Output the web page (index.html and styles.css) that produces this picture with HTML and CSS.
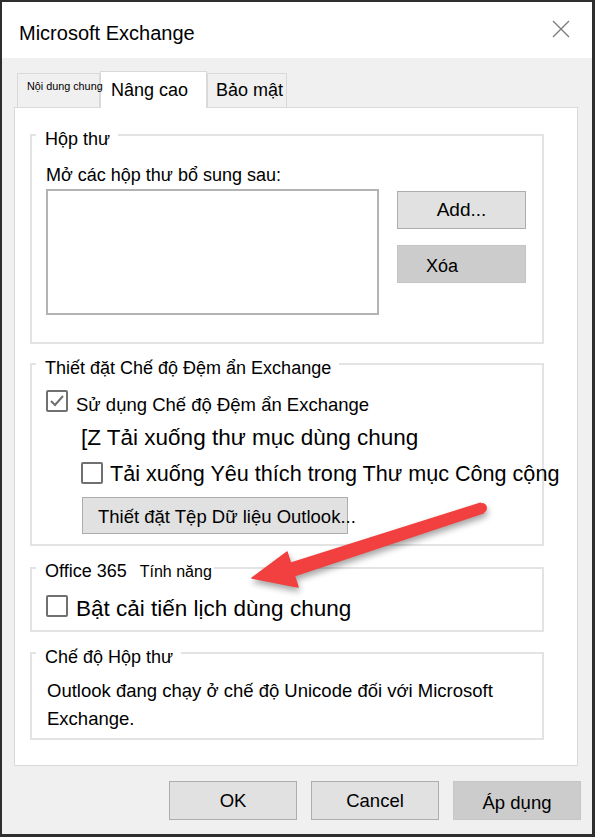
FILE: index.html
```html
<!DOCTYPE html>
<html lang="vi">
<head>
<meta charset="utf-8">
<title>Microsoft Exchange</title>
<link rel="stylesheet" href="styles.css">
</head>
<body>
<div class="window">
  <div class="titlebar">
    <span class="title">Microsoft Exchange</span>
    <svg class="close" viewBox="0 0 18 18"><path d="M1 1 L17 17 M17 1 L1 17" stroke="#7a7a7a" stroke-width="1.3" fill="none"/></svg>
  </div>
  <div class="body">
    <div class="tabs">
      <div class="tab tab-general">Nội dung chung</div>
      <div class="tab tab-active">Nâng cao</div>
      <div class="tab tab-security">Bảo mật</div>
    </div>
    <div class="panel">
      <fieldset class="group g-mailbox">
        <legend>Hộp thư</legend>
        <div class="text-line">Mở các hộp thư bổ sung sau:</div>
        <div class="mailbox-row">
          <div class="listbox"></div>
          <div class="side-buttons">
            <button class="btn btn-side">Add...</button>
            <button class="btn btn-side btn-remove">Xóa</button>
          </div>
        </div>
      </fieldset>

      <fieldset class="group g-cache">
        <legend>Thiết đặt Chế độ Đệm ẩn Exchange</legend>
        <div class="check-row">
          <span class="checkbox"><svg class="tick" viewBox="0 0 18 18"><polyline points="3,9 7,13 15,4" fill="none" stroke="#6e6e6e" stroke-width="2"/></svg></span>
          <span class="cb-label-sm">Sử dụng Chế độ Đệm ẩn Exchange</span>
        </div>
        <div class="big-line">[Z Tải xuống thư mục dùng chung</div>
        <div class="check-row row-fav">
          <span class="checkbox cb-fav"></span>
          <span class="cb-label-big cb-favtext">Tải xuống Yêu thích trong Thư mục Công cộng</span>
        </div>
        <div class="btn btn-datafile">Thiết đặt Tệp Dữ liệu Outlook...</div>
      </fieldset>

      <fieldset class="group g-o365">
        <legend><span class="o365">Office 365</span><span class="feat">Tính năng</span></legend>
        <div class="check-row">
          <span class="checkbox"></span>
          <span class="cb-label-big cb-cal">Bật cải tiến lịch dùng chung</span>
        </div>
      </fieldset>

      <fieldset class="group g-mode">
        <legend>Chế độ Hộp thư</legend>
        <div class="mode-text">Outlook đang chạy ở chế độ Unicode đối với Microsoft Exchange.</div>
      </fieldset>
    </div>
    <div class="footer">
      <button class="btn btn-foot">OK</button>
      <button class="btn btn-foot">Cancel</button>
      <button class="btn btn-foot btn-apply">Áp dụng</button>
    </div>
  </div>
  <svg class="arrow" viewBox="0 0 595 837">
    <polygon points="480.5,503.2 290.6,563.3 287,552 252,578 298,587 294.4,575.7 483.5,512.8" fill="#f1403f" stroke="#f1403f" stroke-width="1.5" stroke-linejoin="round"/>
    <circle cx="482" cy="508" r="5" fill="#f1403f"/>
  </svg>
</div>
</body>
</html>
```
FILE: styles.css
```css
body {
  margin: 0;
  font-family: "Liberation Sans", Arial, sans-serif;
  color: #000;
}

.window {
  position: relative;
  width: 595px;
  height: 837px;
  box-sizing: border-box;
  border: 2px solid #2e2e2e;
  border-right-width: 3px;
  border-bottom-width: 3px;
  background: #f0f0f0;
}

.titlebar {
  height: 56px;
  background: #fff;
  display: flex;
  align-items: center;
  padding-left: 17px;
}

.title {
  flex: 1;
  font-size: 20px;
  line-height: 24px;
  padding-top: 6px;
}

.close {
  width: 18px;
  height: 18px;
  margin-right: 22px;
  margin-bottom: 2px;
}

.body {
  padding-left: 12px;
}

.tabs {
  display: flex;
  align-items: flex-end;
  padding-top: 13px;
  margin-left: 3px;
}

.tab {
  box-sizing: border-box;
  border: 1px solid #d9d9d9;
  border-bottom: none;
  background: #f0f0f0;
  white-space: nowrap;
}

.tab-general {
  width: 83px;
  height: 34px;
  font-size: 10.8px;
  line-height: 14px;
  padding: 5px 0 0 9px;
  position: relative;
  z-index: 2;
}

.tab-active {
  width: 107px;
  height: 37px;
  margin-bottom: -1px;
  background: #fff;
  position: relative;
  z-index: 1;
  font-size: 18px;
  line-height: 22px;
  padding: 7px 0 0 10px;
}

.tab-security {
  width: 80px;
  height: 34px;
  font-size: 18px;
  line-height: 22px;
  padding: 5px 0 0 8px;
}

.panel {
  box-sizing: border-box;
  width: 564px;
  height: 659px;
  border: 1px solid #d9d9d9;
  background: #fff;
  padding: 12px 0 0 15px;
}

.group {
  box-sizing: border-box;
  width: 514px;
  min-width: 0;
  margin: 0;
  border: 2px solid #e3e3e3;
  padding: 0 0 0 14px;
}

.group legend {
  font-size: 18px;
  line-height: 22px;
  padding: 8px 8px 0 9px;
  margin-left: -10px;
  white-space: nowrap;
}

.g-mailbox {
  padding-top: 14px;
  padding-bottom: 27px;
}

.g-cache {
  margin-top: 5px;
  padding-top: 11px;
  padding-bottom: 10px;
}

.g-o365 {
  margin-top: 6px;
  padding-top: 12px;
  padding-bottom: 8px;
}

.g-o365 legend {
  padding-right: 2px;
}

.feat {
  font-size: 16px;
  margin-left: 13px;
}

.g-mode {
  margin-top: 6px;
  padding-top: 9px;
  padding-bottom: 5px;
}

.text-line {
  font-size: 18px;
  line-height: 22px;
}

.mailbox-row {
  display: flex;
  align-items: flex-start;
  margin-top: 3px;
}

.listbox {
  width: 333px;
  height: 126px;
  box-sizing: border-box;
  border: 2px solid #b3b3b3;
  background: #fff;
  flex: none;
}

.side-buttons {
  display: flex;
  flex-direction: column;
  gap: 16px;
  margin-left: 18px;
  margin-top: 2px;
}

.btn {
  display: block;
  box-sizing: border-box;
  font-family: inherit;
  color: #000;
  background: #e1e1e1;
  border: 1px solid #adadad;
  padding: 0;
  margin: 0;
}

.btn-side {
  width: 129px;
  height: 38px;
  font-size: 19px;
}

.btn-remove {
  background: #cccccc;
  border-color: #c4c4c4;
  text-align: left;
  padding-left: 28px;
  padding-top: 5px;
  font-size: 18px;
}

.check-row {
  display: flex;
  align-items: flex-start;
  white-space: nowrap;
}

.checkbox {
  display: block;
  width: 22px;
  height: 22px;
  box-sizing: border-box;
  border: 2px solid #707070;
  border-radius: 2px;
  background: #fff;
  flex: none;
}

.tick {
  display: block;
  width: 18px;
  height: 18px;
}

.cb-label-sm {
  font-size: 18.5px;
  line-height: 22px;
  margin-top: 4px;
  margin-left: 8px;
}

.big-line {
  font-size: 22.5px;
  line-height: 26px;
  margin-top: 9px;
  margin-left: 35px;
  white-space: nowrap;
}

.row-fav {
  margin-top: 10px;
  margin-left: 35px;
}

.cb-fav {
  margin-top: 1px;
}

.cb-label-big {
  font-size: 22.5px;
  line-height: 26px;
  margin-left: 7px;
  white-space: nowrap;
}

.cb-favtext {
  font-size: 21.6px;
}

.cb-cal {
  margin-top: 1px;
  margin-left: 8px;
}

.btn-datafile {
  margin-top: 10px;
  margin-left: 36px;
  width: 266px;
  height: 37px;
  font-size: 18.5px;
  line-height: 22px;
  padding-left: 15px;
  padding-top: 8px;
  white-space: nowrap;
}

.mode-text {
  font-size: 18.5px;
  line-height: 28px;
  padding-left: 1px;
}

.footer {
  display: flex;
  justify-content: flex-end;
  gap: 14px;
  margin-top: 15px;
  padding-right: 11px;
}

.btn-foot {
  width: 128px;
  height: 39px;
  font-size: 18.5px;
}

.btn-apply {
  background: #cccccc;
  border-color: #c6c6c6;
  padding-top: 4px;
}

.arrow {
  position: absolute;
  left: -2px;
  top: -2px;
  width: 595px;
  height: 837px;
  pointer-events: none;
  filter: drop-shadow(1px 4px 3px rgba(0, 0, 0, 0.35));
}
```
